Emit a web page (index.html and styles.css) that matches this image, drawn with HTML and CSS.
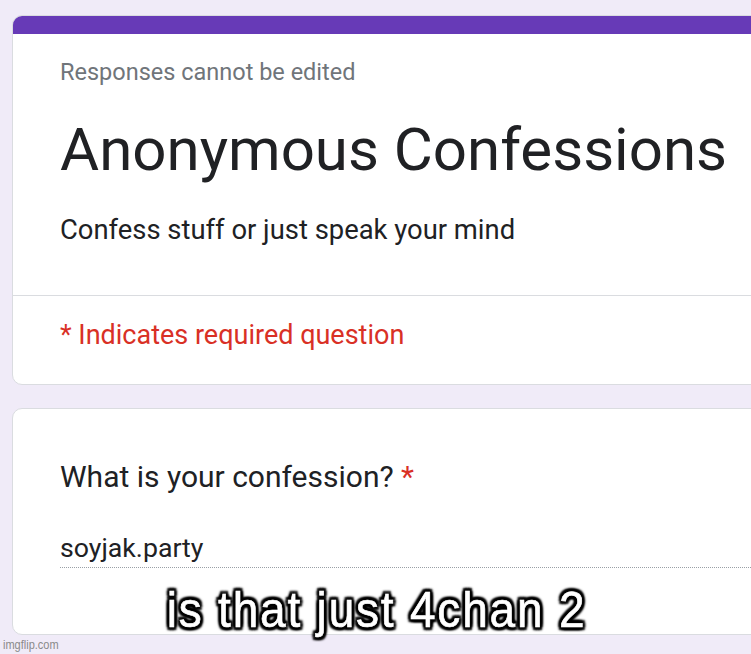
FILE: index.html
```html
<!DOCTYPE html>
<html>
<head>
<meta charset="utf-8">
<link rel="stylesheet" href="styles.css">
</head>
<body>
<div class="page">
  <div class="card card-head">
    <div class="bar"></div>
    <div class="head-main">
      <div class="note">Responses cannot be edited</div>
      <div class="title">Anonymous Confessions</div>
      <div class="desc">Confess stuff or just speak your mind</div>
    </div>
    <div class="head-req">
      <div class="req">* Indicates required question</div>
    </div>
  </div>
  <div class="card card-q">
    <div class="question">What is your confession? <span class="star">*</span></div>
    <div class="answer">soyjak.party</div>
  </div>
  <div class="watermark">imgflip.com</div>
  <div class="meme">is that just 4chan 2</div>
</div>
</body>
</html>
```

FILE: styles.css
```css
html, body {
  margin: 0;
  padding: 0;
  background: #f0ebf8;
  overflow: hidden;
}
.page {
  position: relative;
  width: 751px;
  height: 654px;
  overflow: hidden;
  padding: 15px 0 0 12px;
  box-sizing: border-box;
  font-family: Roboto, "Liberation Sans", sans-serif;
  color: #202124;
}
.card {
  width: 820px;
  background: #fff;
  border: 1px solid #dadce0;
  border-radius: 10px;
  box-sizing: border-box;
  overflow: hidden;
}
.bar {
  height: 19px;
  background: #673ab7;
  margin: -1px -1px 0 -1px;
}
.head-main {
  padding: 23px 0 47px 47px;
  border-bottom: 1px solid #dadce0;
}
.note {
  font-size: 23.5px;
  line-height: 30px;
  color: #70757a;
}
.title {
  margin-top: 28px;
  font-size: 60px;
  line-height: 70px;
  color: #202124;
}
.desc {
  margin-top: 27px;
  font-size: 27.4px;
  line-height: 36px;
}
.head-req {
  padding: 24px 0 34px 47px;
}
.req {
  font-size: 27px;
  line-height: 30px;
  color: #d93025;
}
.card-q {
  margin-top: 23px;
  padding: 52px 0 66px 47px;
}
.question {
  font-size: 30px;
  line-height: 32px;
}
.star {
  color: #d93025;
}
.answer {
  margin-top: 40px;
  font-size: 26.7px;
  line-height: 30px;
  padding-bottom: 4px;
  border-bottom: 1px dotted #9aa0a6;
}
.watermark {
  font-family: "Liberation Sans", sans-serif;
  font-size: 12.5px;
  line-height: 20px;
  color: #8a8a8a;
  margin-left: -9px;
  transform: scaleX(0.88);
  transform-origin: left center;
}
.meme {
  position: absolute;
  left: 0;
  right: 0;
  top: 585px;
  padding-left: 2px;
  text-align: center;
  font-family: "Liberation Sans", Arial, sans-serif;
  font-size: 46px;
  letter-spacing: 1.8px;
  line-height: 52px;
  color: #fff;
  transform: scaleY(1.1);
  transform-origin: center 42px;
  -webkit-text-stroke: 0.6px #fff;
  text-shadow:
    2.5px 2.5px 2px #000, -2.5px -2.5px 2px #000, 2.5px -2.5px 2px #000, -2.5px 2.5px 2px #000,
    0 3px 2px #000, 0 -3px 2px #000, 3px 0 2px #000, -3px 0 2px #000,
    0 0 5px #000;
}
```
